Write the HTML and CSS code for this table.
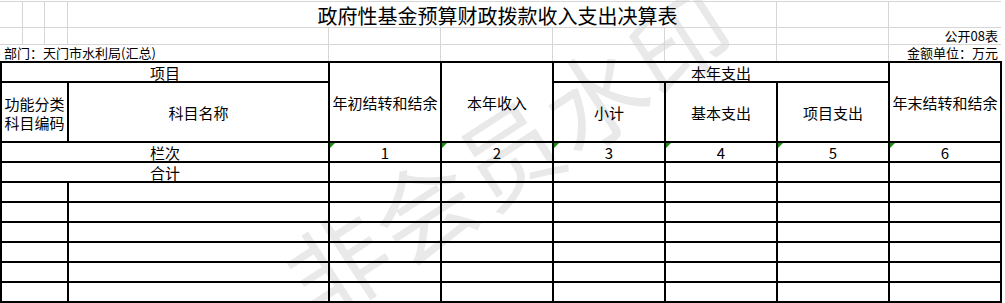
FILE: index.html
```html
<!DOCTYPE html>
<html lang="zh-CN">
<head>
<meta charset="utf-8">
<title>政府性基金预算财政拨款收入支出决算表</title>
<link rel="stylesheet" href="styles.css">
</head>
<body>
<div class="sheet">
  <div class="watermark">非会员水印</div>

  <div class="top">
    <div class="tc"></div><div class="tc"></div><div class="tc"></div>
    <div class="tc title">政府性基金预算财政拨款收入支出决算表</div>
    <div class="tc"></div><div class="tc end"></div>

    <div class="tc"></div><div class="tc"></div><div class="tc"></div><div class="tc"></div>
    <div class="tc"></div><div class="tc"></div><div class="tc"></div><div class="tc"></div><div class="tc"></div>
    <div class="tc end label right">公开08表</div>

    <div class="tc last dept label left">部门：天门市水利局(汇总)</div>
    <div class="tc last"></div><div class="tc last"></div><div class="tc last"></div><div class="tc last"></div><div class="tc last"></div>
    <div class="tc last end label right">金额单位：万元</div>
  </div>

  <div class="table">
    <div class="cell span2">项目</div>
    <div class="cell rows2">年初结转和结余</div>
    <div class="cell rows2">本年收入</div>
    <div class="cell span3">本年支出</div>
    <div class="cell rows2">年末结转和结余</div>

    <div class="cell code">功能分类<br>科目编码</div>
    <div class="cell">科目名称</div>
    <div class="cell">小计</div>
    <div class="cell">基本支出</div>
    <div class="cell">项目支出</div>

    <div class="cell span2">栏次</div>
    <div class="cell mark">1</div><div class="cell mark">2</div><div class="cell mark">3</div>
    <div class="cell mark">4</div><div class="cell mark">5</div><div class="cell mark">6</div>

    <div class="cell span2">合计</div>
    <div class="cell"></div><div class="cell"></div><div class="cell"></div><div class="cell"></div><div class="cell"></div><div class="cell"></div>

    <div class="cell"></div><div class="cell"></div><div class="cell"></div><div class="cell"></div><div class="cell"></div><div class="cell"></div><div class="cell"></div><div class="cell"></div>
    <div class="cell"></div><div class="cell"></div><div class="cell"></div><div class="cell"></div><div class="cell"></div><div class="cell"></div><div class="cell"></div><div class="cell"></div>
    <div class="cell"></div><div class="cell"></div><div class="cell"></div><div class="cell"></div><div class="cell"></div><div class="cell"></div><div class="cell"></div><div class="cell"></div>
    <div class="cell"></div><div class="cell"></div><div class="cell"></div><div class="cell"></div><div class="cell"></div><div class="cell"></div><div class="cell"></div><div class="cell"></div>
    <div class="cell"></div><div class="cell"></div><div class="cell"></div><div class="cell"></div><div class="cell"></div><div class="cell"></div><div class="cell"></div><div class="cell"></div>
    <div class="cell"></div><div class="cell"></div><div class="cell"></div><div class="cell"></div><div class="cell"></div><div class="cell"></div><div class="cell"></div><div class="cell"></div>
  </div>
</div>
</body>
</html>
```

FILE: styles.css
```css
html, body {
  margin: 0;
  padding: 0;
  background: #ffffff;
}

body {
  font-family: "Noto Sans CJK SC", "Noto Sans", sans-serif;
  color: #000;
}

.sheet {
  position: relative;
  width: 1005px;
  height: 303px;
  padding-top: 1px;
  box-sizing: border-box;
  overflow: hidden;
  display: flex;
  flex-direction: column;
}

.watermark {
  position: absolute;
  left: 508px;
  top: 150px;
  transform: translate(-50%, -50%) rotate(-33deg);
  font-size: 100px;
  line-height: 1;
  white-space: nowrap;
  color: #e9e9e9;
  z-index: 0;
  letter-spacing: 2px;
}

/* upper sheet area with light grid lines */
.top {
  position: relative;
  z-index: 1;
  display: grid;
  grid-template-columns: 23px 22px 23px 261px repeat(6, 112px);
  grid-template-rows: 26px 17px 16px;
  border-top: 1px solid #d6d6d6;
  width: max-content;
}

.tc {
  border-right: 1px solid #d6d6d6;
  border-bottom: 1px solid #d6d6d6;
  display: flex;
  align-items: center;
  white-space: nowrap;
}

.tc.end {
  border-right: none;
}

.tc.last {
  border-bottom: none;
}

.title {
  grid-column: span 5;
  justify-content: center;
  padding-left: 151px;
  padding-top: 3px;
  font-size: 20px;
  line-height: 24px;
}

.label {
  font-size: 13px;
  line-height: 16px;
}

.dept {
  grid-column: span 4;
}

.left {
  justify-content: flex-start;
  padding-left: 4px;
}

.right {
  justify-content: flex-end;
  padding-right: 3px;
}

/* main table */
.table {
  position: relative;
  z-index: 1;
  display: grid;
  grid-template-columns: 67px 261px repeat(6, 112px);
  grid-template-rows: 20px 60px repeat(8, 20px);
  border-top: 2px solid #000;
  border-left: 2px solid #000;
  width: max-content;
}

.cell {
  position: relative;
  border-right: 2px solid #000;
  border-bottom: 2px solid #000;
  display: flex;
  align-items: center;
  justify-content: center;
  text-align: center;
  font-size: 15px;
  line-height: 19px;
  white-space: nowrap;
}

.span2 {
  grid-column: span 2;
}

.span3 {
  grid-column: span 3;
}

.rows2 {
  grid-row: span 2;
}

.code {
  padding-top: 2px;
}

.mark::before {
  content: "";
  position: absolute;
  left: 0;
  top: 0;
  width: 0;
  height: 0;
  border-top: 5px solid #1a8a1a;
  border-right: 5px solid transparent;
}
```
